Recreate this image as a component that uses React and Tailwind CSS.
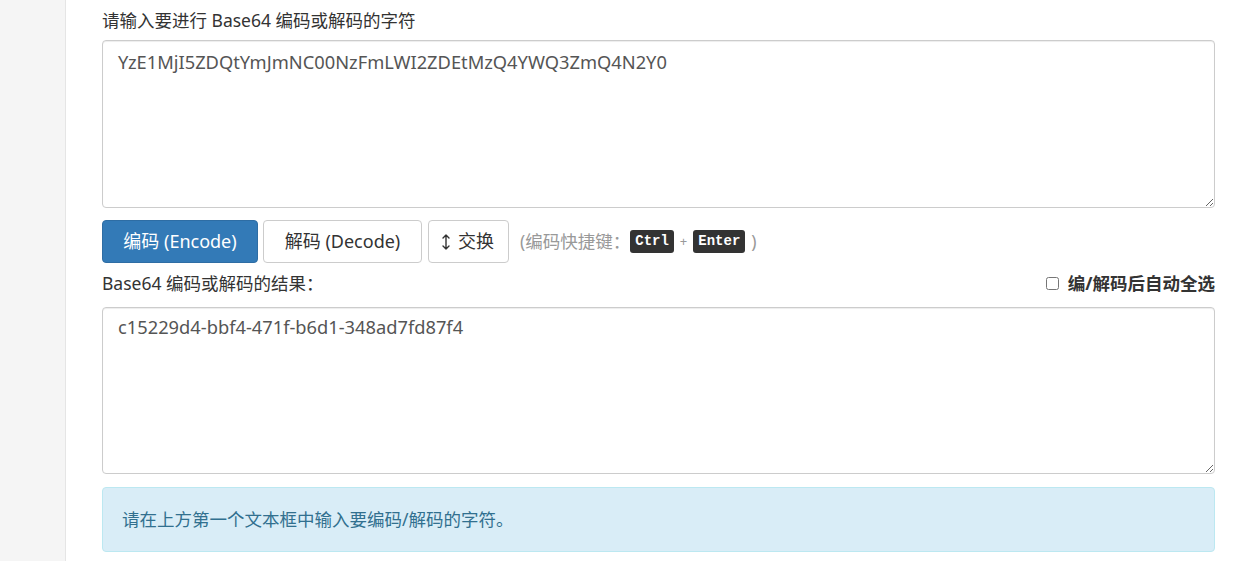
import React from 'react';

const font = { fontFamily: '"Noto Sans", "Noto Sans CJK SC", sans-serif' };

const Kbd = ({ children }) => (
  <kbd className="inline-block rounded-[3px] bg-[#333] px-[5px] py-[2px] text-[14px] leading-[19px] text-white font-['Liberation_Mono',monospace] font-bold">
    {children}
  </kbd>
);

const SwapArrow = () => (
  <svg width="8" height="16" viewBox="0 0 8 16" fill="none" stroke="#333" strokeWidth="1.4" strokeLinecap="round" strokeLinejoin="round">
    <path d="M4 1v14M1 4l3-3 3 3M1 12l3 3 3-3" />
  </svg>
);

export default function App() {
  return (
    <div className="flex h-[561px] w-[1234px] overflow-hidden bg-white text-[#333]" style={font}>
      {/* left rail */}
      <div className="w-[66px] shrink-0 border-r border-[#e5e5e5] bg-[#f5f5f5]" />

      <main className="flex-1 pl-[36px] pr-[19px]">
        <p className="mt-[8px] text-[17.5px] leading-[25px]">请输入要进行 Base64 编码或解码的字符</p>

        <textarea
          readOnly
          defaultValue="YzE1MjI5ZDQtYmJmNC00NzFmLWI2ZDEtMzQ4YWQ3ZmQ4N2Y0"
          className="mt-[7px] block h-[168px] w-full resize-y rounded-[4px] border border-[#ccc] px-[15px] py-[8px] text-[18.3px] leading-[26px] text-[#555] outline-none shadow-[inset_0_1px_1px_rgba(0,0,0,0.075)]"
        />

        <div className="mt-[12px] flex items-center gap-[5px]">
          <button className="h-[43px] w-[156px] rounded-[4px] border border-[#2e6da4] bg-[#337ab7] text-[18px] text-white">
            编码 (Encode)
          </button>
          <button className="h-[43px] w-[159px] rounded-[4px] border border-[#ccc] bg-white text-[18px] text-[#333]">
            解码 (Decode)
          </button>
          <button className="ml-[1px] flex h-[43px] w-[81px] items-center gap-[8px] rounded-[4px] border border-[#ccc] bg-white pl-[13px] text-[18px] text-[#333]">
            <SwapArrow />
            交换
          </button>
          <span className="ml-[6px] flex items-center text-[17.5px] text-[#999]">
            (编码快捷键：<Kbd>Ctrl</Kbd>
            <span className="mx-[6px] text-[13px]">+</span>
            <Kbd>Enter</Kbd>
            <span className="ml-[6px]">)</span>
          </span>
        </div>

        <div className="mt-[8px] flex items-end justify-between">
          <p className="text-[17.5px] leading-[25px]">Base64 编码或解码的结果：</p>
          <label className="flex items-center gap-[9px] text-[17.5px] font-bold leading-[25px]">
            <input type="checkbox" className="h-[13px] w-[13px]" />
            编/解码后自动全选
          </label>
        </div>

        <textarea
          readOnly
          defaultValue="c15229d4-bbf4-471f-b6d1-348ad7fd87f4"
          className="mt-[11px] block h-[167px] w-full resize-y rounded-[4px] border border-[#ccc] px-[15px] py-[6px] text-[18.3px] leading-[26px] text-[#555] outline-none shadow-[inset_0_1px_1px_rgba(0,0,0,0.075)]"
        />

        <div className="mt-[13px] h-[65px] rounded-[4px] border border-[#bce8f1] bg-[#d9edf7] px-[19px] pt-[19px] text-[17.5px] leading-[25px] text-[#31708f]">
          请在上方第一个文本框中输入要编码/解码的字符。
        </div>
      </main>
    </div>
  );
}
